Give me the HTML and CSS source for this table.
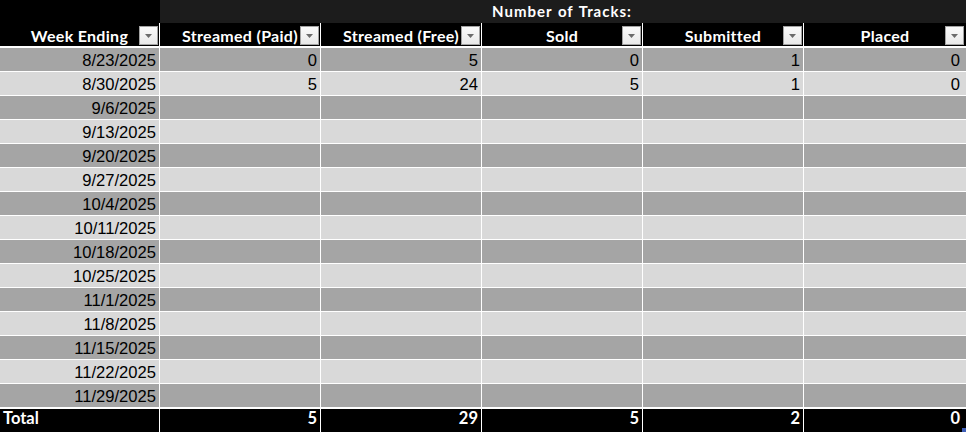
FILE: index.html
```html
<!DOCTYPE html>
<html>
<head>
<meta charset="utf-8">
<link rel="stylesheet" href="styles.css">
</head>
<body>
<div class="sheet">
  <div class="title-row">
    <div class="title-blank"></div>
    <div class="title-cell">Number of Tracks:</div>
  </div>
  <div class="row head-row">
    <div class="hcell"><span class="htext">Week Ending</span><span class="filter"><svg width="7" height="4" viewBox="0 0 7 4"><polygon points="0,0 7,0 3.5,4" fill="#6b6b6b"/></svg></span></div>
    <div class="hcell"><span class="htext">Streamed (Paid)</span><span class="filter"><svg width="7" height="4" viewBox="0 0 7 4"><polygon points="0,0 7,0 3.5,4" fill="#6b6b6b"/></svg></span></div>
    <div class="hcell"><span class="htext">Streamed (Free)</span><span class="filter"><svg width="7" height="4" viewBox="0 0 7 4"><polygon points="0,0 7,0 3.5,4" fill="#6b6b6b"/></svg></span></div>
    <div class="hcell"><span class="htext">Sold</span><span class="filter"><svg width="7" height="4" viewBox="0 0 7 4"><polygon points="0,0 7,0 3.5,4" fill="#6b6b6b"/></svg></span></div>
    <div class="hcell"><span class="htext">Submitted</span><span class="filter"><svg width="7" height="4" viewBox="0 0 7 4"><polygon points="0,0 7,0 3.5,4" fill="#6b6b6b"/></svg></span></div>
    <div class="hcell last"><span class="htext">Placed</span><span class="filter"><svg width="7" height="4" viewBox="0 0 7 4"><polygon points="0,0 7,0 3.5,4" fill="#6b6b6b"/></svg></span></div>
  </div>
  <div class="body">
    <div class="row drow dark"><div class="cell">8/23/2025</div><div class="cell">0</div><div class="cell">5</div><div class="cell">0</div><div class="cell">1</div><div class="cell last">0</div></div>
    <div class="row drow light"><div class="cell">8/30/2025</div><div class="cell">5</div><div class="cell">24</div><div class="cell">5</div><div class="cell">1</div><div class="cell last">0</div></div>
    <div class="row drow dark"><div class="cell">9/6/2025</div><div class="cell"></div><div class="cell"></div><div class="cell"></div><div class="cell"></div><div class="cell last"></div></div>
    <div class="row drow light"><div class="cell">9/13/2025</div><div class="cell"></div><div class="cell"></div><div class="cell"></div><div class="cell"></div><div class="cell last"></div></div>
    <div class="row drow dark"><div class="cell">9/20/2025</div><div class="cell"></div><div class="cell"></div><div class="cell"></div><div class="cell"></div><div class="cell last"></div></div>
    <div class="row drow light"><div class="cell">9/27/2025</div><div class="cell"></div><div class="cell"></div><div class="cell"></div><div class="cell"></div><div class="cell last"></div></div>
    <div class="row drow dark"><div class="cell">10/4/2025</div><div class="cell"></div><div class="cell"></div><div class="cell"></div><div class="cell"></div><div class="cell last"></div></div>
    <div class="row drow light"><div class="cell">10/11/2025</div><div class="cell"></div><div class="cell"></div><div class="cell"></div><div class="cell"></div><div class="cell last"></div></div>
    <div class="row drow dark"><div class="cell">10/18/2025</div><div class="cell"></div><div class="cell"></div><div class="cell"></div><div class="cell"></div><div class="cell last"></div></div>
    <div class="row drow light"><div class="cell">10/25/2025</div><div class="cell"></div><div class="cell"></div><div class="cell"></div><div class="cell"></div><div class="cell last"></div></div>
    <div class="row drow dark"><div class="cell">11/1/2025</div><div class="cell"></div><div class="cell"></div><div class="cell"></div><div class="cell"></div><div class="cell last"></div></div>
    <div class="row drow light"><div class="cell">11/8/2025</div><div class="cell"></div><div class="cell"></div><div class="cell"></div><div class="cell"></div><div class="cell last"></div></div>
    <div class="row drow dark"><div class="cell">11/15/2025</div><div class="cell"></div><div class="cell"></div><div class="cell"></div><div class="cell"></div><div class="cell last"></div></div>
    <div class="row drow light"><div class="cell">11/22/2025</div><div class="cell"></div><div class="cell"></div><div class="cell"></div><div class="cell"></div><div class="cell last"></div></div>
    <div class="row drow dark"><div class="cell">11/29/2025</div><div class="cell"></div><div class="cell"></div><div class="cell"></div><div class="cell"></div><div class="cell last"></div></div>
  </div>
  <div class="row total-row">
    <div class="tcell label">Total</div>
    <div class="tcell">5</div>
    <div class="tcell">29</div>
    <div class="tcell">5</div>
    <div class="tcell">2</div>
    <div class="tcell last corner">0<span class="handle"></span></div>
  </div>
</div>
</body>
</html>
```

FILE: styles.css
```css
html, body {
  margin: 0;
  padding: 0;
  background: #ffffff;
  overflow: hidden;
}

.sheet {
  width: 966px;
  height: 432px;
  background: #ffffff;
  display: flex;
  flex-direction: column;
}

.title-row {
  height: 23px;
  display: grid;
  grid-template-columns: 160px 1fr;
}

.title-blank {
  background: #000000;
}

.title-cell {
  background: #1c1c1c;
  color: #ffffff;
  font-family: Lato, "Liberation Sans", sans-serif;
  font-weight: 700;
  font-size: 15px;
  line-height: 19px;
  letter-spacing: 1px;
  word-spacing: 1px;
  text-align: center;
  padding-top: 2px;
  padding-right: 2px;
  box-sizing: border-box;
}

.row {
  display: grid;
  grid-template-columns: 159px 160px 160px 160px 160px 1fr;
  column-gap: 1px;
}

.head-row {
  height: 23px;
  margin-bottom: 2px;
}

.hcell {
  background: #000000;
  display: grid;
  align-items: end;
}

.htext,
.filter {
  grid-area: 1 / 1;
}

.htext {
  justify-self: center;
  color: #ffffff;
  font-family: Lato, "Liberation Sans", sans-serif;
  font-weight: 700;
  font-size: 16px;
  line-height: 19px;
  letter-spacing: 0.3px;
  padding-bottom: 1px;
  white-space: nowrap;
}

.filter {
  justify-self: end;
  align-self: center;
  margin-right: 1px;
  margin-top: 2px;
  width: 17px;
  height: 17px;
  border: 1px solid #a3a3a3;
  background: linear-gradient(#fafafa, #e9e9e9);
  display: flex;
  align-items: center;
  justify-content: center;
}

.filter svg {
  display: block;
  margin-top: 1px;
}

.hcell.last .filter {
  margin-right: 2px;
}

.body {
  display: flex;
  flex-direction: column;
  row-gap: 1px;
}

.drow {
  height: 23px;
}

.cell {
  display: flex;
  align-items: flex-end;
  justify-content: flex-end;
  padding: 0 3px 1px 0;
  font-family: "Liberation Sans", Arial, sans-serif;
  font-size: 16.6px;
  line-height: 18px;
  color: #000000;
}

.cell.last {
  padding-right: 6px;
}

.dark .cell {
  background: #a5a5a5;
}

.light .cell {
  background: #d9d9d9;
}

.total-row {
  margin-top: 2px;
  height: 23px;
}

.tcell {
  background: #000000;
  color: #ffffff;
  font-family: Lato, "Liberation Sans", sans-serif;
  font-weight: 700;
  font-size: 16.5px;
  line-height: 19px;
  text-align: right;
  padding: 0 3px 0 0;
}

.tcell.label {
  text-align: left;
  padding: 0 0 0 3px;
}

.tcell.last {
  padding-right: 6px;
}

.corner {
  position: relative;
}

.handle {
  position: absolute;
  right: 0;
  bottom: 0;
  width: 4px;
  height: 4px;
  background: #3f5fb8;
}
```
